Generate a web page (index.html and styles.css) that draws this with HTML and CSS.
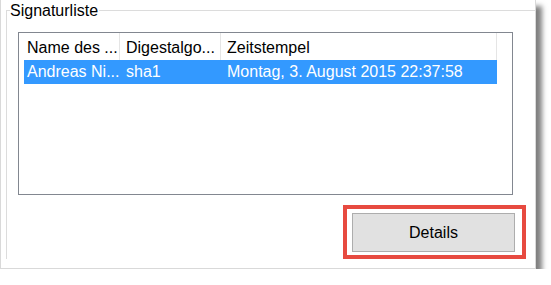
FILE: index.html
```html
<!DOCTYPE html>
<html lang="de">

<head>
  <meta charset="UTF-8">
  <meta name="viewport" content="width=device-width, initial-scale=1.0">
  <title>Signaturliste</title>

  <link rel="stylesheet" href="styles.css">
</head>

<body>
  <div class="window">
    <fieldset class="group">
      <legend>Signaturliste</legend>
      <div class="list">
        <div class="head">
          <div class="cell col-name">Name des ...</div>
          <div class="cell col-algo">Digestalgo...</div>
          <div class="cell col-time">Zeitstempel</div>
        </div>
        <div class="row selected">
          <div class="cell col-name">Andreas Ni...</div>
          <div class="cell col-algo">sha1</div>
          <div class="cell col-time">Montag, 3. August 2015 22:37:58</div>
        </div>
      </div>
      <div class="actions">
        <div class="highlight">
          <button class="button">Details</button>
        </div>
      </div>
    </fieldset>
  </div>
</body>

</html>
```

FILE: styles.css
```css
* {
  box-sizing: border-box;
}

body {
  margin: 0;
  background-color: #ffffff;
  font-family: "Liberation Sans", Arial, sans-serif;
  font-size: 16px;
  color: #000000;
}

.window {
  width: 536px;
  height: 269px;
  background-color: #ffffff;
  border: 1px solid #d9d9d9;
  border-top: none;
  box-shadow: 6px 6px 5px rgba(0, 0, 0, .5);
}

.group {
  margin: 0 0 0 5px;
  padding: 0;
  min-width: 0;
  border: none;
  border-top: 1px solid #dcdcdc;
  border-left: 1px solid #dcdcdc;
}

.group legend {
  margin-left: 3px;
  padding: 1px 1px 0 0;
  line-height: 20px;
}

.list {
  width: 495px;
  height: 163px;
  margin: 11px 0 0 11px;
  padding-left: 5px;
  border: 1px solid #828790;
}

.head,
.row {
  display: flex;
}

.cell {
  padding-left: 6px;
  white-space: nowrap;
  overflow: hidden;
}

.col-name {
  width: 96px;
  padding-left: 3px;
}

.col-algo {
  width: 101px;
}

.col-time {
  width: 276px;
}

.head .cell {
  height: 27px;
  padding-top: 2px;
  line-height: 25px;
  border-right: 1px solid #e5e5e5;
}

.row .cell {
  height: 24px;
  line-height: 24px;
}

.row.selected {
  width: 473px;
  background-color: #3399ff;
}

.row.selected .cell {
  color: #ffffff;
}

.actions {
  display: flex;
  justify-content: flex-end;
  margin: 10px 9px 0 0;
}

.highlight {
  width: 183px;
  height: 54px;
  padding: 4px 7px 3px 5px;
  border: 4px solid #e74a40;
}

.button {
  display: block;
  width: 163px;
  height: 39px;
  padding: 0;
  border: 1px solid #adadad;
  background-color: #e1e1e1;
  font-family: inherit;
  font-size: 16px;
  color: #000000;
  cursor: pointer;
}
```
